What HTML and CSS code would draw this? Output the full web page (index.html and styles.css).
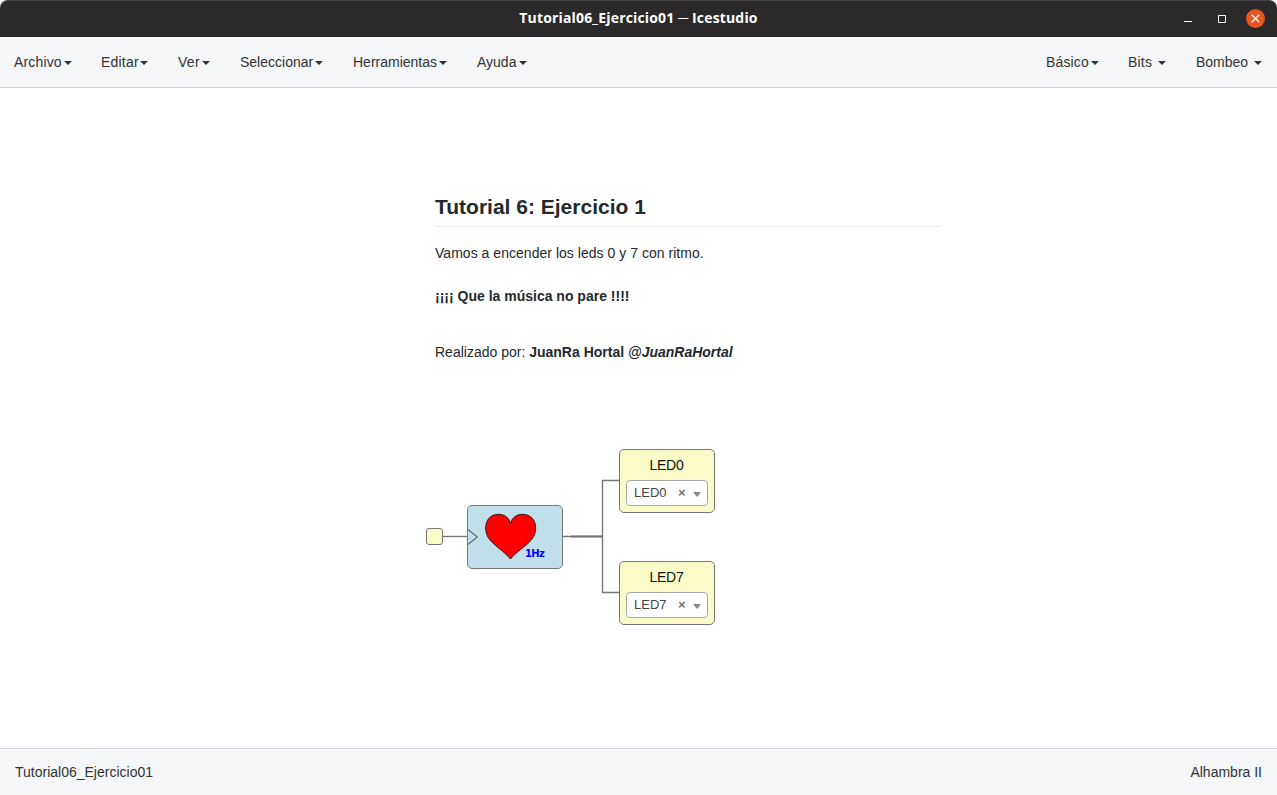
FILE: index.html
```html
<!DOCTYPE html>
<html lang="es">
<head>
<meta charset="utf-8">
<title>Tutorial06_Ejercicio01 ─ Icestudio</title>
<link rel="stylesheet" href="styles.css">
</head>
<body>
<div class="window">
  <header class="titlebar">
    <div class="title">Tutorial06_Ejercicio01 ─ Icestudio</div>
    <div class="controls">
      <svg width="10" height="19" viewBox="0 0 10 19"><path d="M1 12.5h8" stroke="#fff"/></svg>
      <svg width="10" height="19" viewBox="0 0 10 19"><path d="M1.5 6.5h7v7h-7z" fill="none" stroke="#fff"/></svg>
      <svg width="19" height="19" viewBox="0 0 19 19"><circle cx="9.5" cy="9.5" r="9.4" fill="#e95420"/><path d="M5.700 5.700l7.600 7.600M13.300 5.700l-7.600 7.600" stroke="#fff" stroke-width="1.3"/></svg>
    </div>
  </header>
  <nav class="menubar">
    <ul class="menu">
      <li class="item archivo"><span>Archivo</span><i class="caret"></i></li>
      <li class="item editar"><span>Editar</span><i class="caret"></i></li>
      <li class="item ver"><span>Ver</span><i class="caret"></i></li>
      <li class="item seleccionar"><span>Seleccionar</span><i class="caret"></i></li>
      <li class="item herramientas"><span>Herramientas</span><i class="caret"></i></li>
      <li class="item ayuda"><span>Ayuda</span><i class="caret"></i></li>
    </ul>
    <ul class="menu">
      <li class="item basico"><span>Básico</span><i class="caret"></i></li>
      <li class="item bits"><span>Bits</span><i class="caret"></i></li>
      <li class="item bombeo"><span>Bombeo</span><i class="caret"></i></li>
    </ul>
  </nav>
  <main class="canvas">
    <article class="note">
      <h2>Tutorial 6: Ejercicio 1</h2>
      <p class="intro">Vamos a encender los leds 0 y 7 con ritmo.</p>
      <p class="music"><b>¡¡¡¡ Que la música no pare !!!!</b></p>
      <p class="author"><span class="by">Realizado por:</span> <b>JuanRa Hortal</b> <b class="handle">@JuanRaHortal</b></p>
    </article>
    <svg class="wires" width="1277" height="660" viewBox="0 88 1277 660">
      <g fill="none" stroke="#777" stroke-width="1.4">
        <path d="M442 536.5H467"/>
        <path d="M563 536.5H603M602.5 537V480.5H619M602.5 536V592.5H619"/>
        <path d="M571 536.5H603" stroke-width="2"/>
      </g>
    </svg>
    <div class="node clock"></div>
    <div class="node heart">
      <svg width="94" height="62" viewBox="468 506 94 62">
        <path d="M468 529.500L477.300 537L468 544.500" fill="none" stroke="#666" stroke-width="1.200"/>
        <path d="M510.500 523C508.500 516.800 503.500 514.300 498.500 514.300C490 514.300 485.700 520.500 485.700 528C485.700 542.500 500 546.500 510.500 559C521 546.500 535.700 542.500 535.700 528C535.700 520.500 531 514.300 522.500 514.300C517.500 514.300 512.500 516.800 510.500 523Z" fill="#f00" stroke="#222"/>
      </svg>
      <span class="hz">1Hz</span>
    </div>
    <div class="node led led0">
      <div class="led-name">LED0</div>
      <div class="select"><span>LED0</span><b>×</b><i class="arrow"></i></div>
    </div>
    <div class="node led led7">
      <div class="led-name">LED7</div>
      <div class="select"><span>LED7</span><b>×</b><i class="arrow"></i></div>
    </div>
  </main>
  <footer class="status"><span class="project">Tutorial06_Ejercicio01</span><span class="board">Alhambra II</span></footer>
</div>
</body>
</html>
```
FILE: styles.css
```css
* { box-sizing: border-box; }
body { margin: 0; background: #fff; font: 14px/20px "Liberation Sans", Arial, sans-serif; color: #333; }
.window { width: 1277px; height: 795px; display: flex; flex-direction: column; overflow: hidden; white-space: nowrap; }
.titlebar { height: 37px; flex: none; display: grid; grid-template-columns: 1fr auto 1fr; background: #2c292a; border-top: 1px solid #434142; border-radius: 8px 8px 0 0; }
.title { grid-column: 2; font: bold 14px/34px "Open Sans", "Noto Sans", sans-serif; letter-spacing: .16px; color: #fff; }
.controls { grid-column: 3; justify-self: end; display: flex; gap: 24px; padding: 8px 12px 0 0; }
.controls svg:last-child { margin-left: -4px; }
.controls svg:nth-child(-n+2) { margin-right: 0; transform: translateX(1px); }
.menubar { height: 51px; flex: none; display: flex; justify-content: space-between; padding: 15px 15px 0 14px; background: #f4f6f8; border-bottom: 1px solid #d4d8dc; }
.menu { display: flex; gap: 30px; margin: 0; padding: 0; list-style: none; }
.item { display: flex; justify-content: space-between; align-items: flex-start; }
.caret { border: 4px solid transparent; border-top-color: #333; border-bottom: 0; margin-top: 9px; }
.archivo { width: 58px; margin-right: -1px; letter-spacing: .15px; }
.editar { width: 47px; letter-spacing: .2px; }
.ver { width: 32px; letter-spacing: .3px; }
.seleccionar { width: 83px; }
.herramientas { width: 94px; }
.ayuda { width: 50px; }
.basico { width: 53px; margin-right: -1px; letter-spacing: .15px; }
.bits { width: 38px; letter-spacing: .2px; }
.bombeo { width: 66px; }
.canvas { flex: 1; position: relative; background: #fff; }
.note { padding: 107px 0 0 435px; width: 940px; color: #24292e; }
.note h2 { margin: 0; height: 32px; font-size: 21px; line-height: 24px; border-bottom: 1px solid #eaecef; }
.note p { margin: 0; line-height: 20px; }
.note .intro { margin-top: 16px; letter-spacing: .03px; }
.note .music { margin-top: 23px; }
.note .author { margin-top: 36px; }
.handle { font-style: italic; }
.wires { position: absolute; left: 0; top: 0; }
.node { position: absolute; border: 1px solid #777; border-radius: 5px; }
.clock { left: 426px; top: 440px; width: 17px; height: 17px; background: #fbfac9; border-radius: 3px; }
.heart { left: 467px; top: 417px; width: 96px; height: 64px; background: #c1dfea; }
.heart svg { display: block; }
.hz { position: absolute; left: 57px; top: 42px; font: bold 10px/12px "DejaVu Sans", sans-serif; color: #00f; letter-spacing: -.7px; }
.led { left: 619px; width: 96px; height: 64px; background: #fbfac9; padding: 5px 6px; }
.led0 { top: 361px; }
.led7 { top: 473px; }
.led-name { text-align: center; height: 25px; padding-right: 1px; letter-spacing: -.2px; color: #111; }
.select { display: flex; align-items: center; width: 82px; height: 26px; padding-left: 7px; background: #fff; border: 1px solid #aaa; border-radius: 4px; font-size: 13px; color: #444; }
.select span { width: 44px; }
.select b { width: 15px; color: #777; }
.arrow { border: 4px solid transparent; border-top: 5px solid #888; border-bottom: 0; margin-top: 3px; }
.status { height: 47px; flex: none; display: flex; justify-content: space-between; padding: 13px 15px; background: #f4f6f8; border-top: 1px solid #d4d8dc; }
```
